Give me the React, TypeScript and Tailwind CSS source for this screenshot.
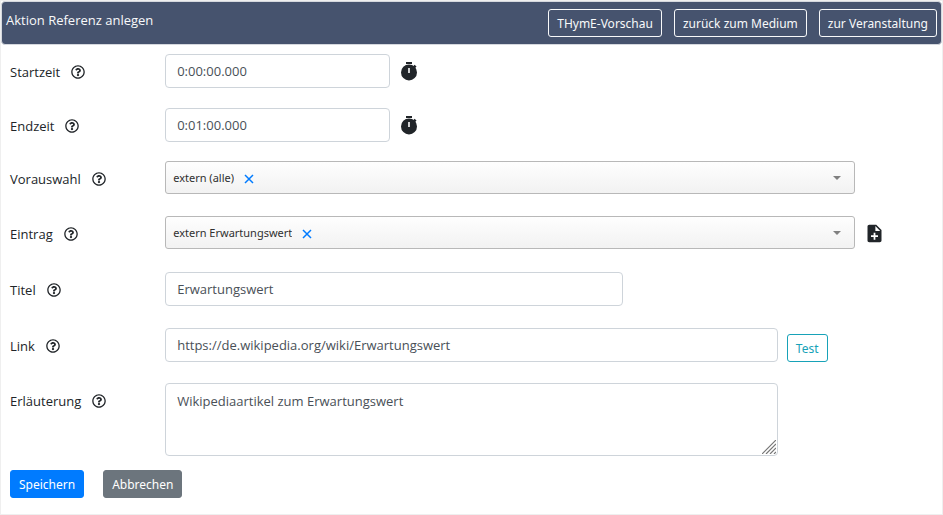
import type { ReactNode } from "react";
import { FaRegQuestionCircle } from "react-icons/fa";
import { MdNoteAdd } from "react-icons/md";

const inputClass =
  "block w-full h-[34px] rounded border border-[#ced4da] bg-white px-[11px] text-[13px] text-[#495057] outline-none";
const buttonClass =
  "h-7 rounded-[3px] border px-2 pt-[2px] font-['Noto_Sans',sans-serif] text-xs whitespace-nowrap";

function StopwatchIcon() {
  return (
    <svg width="18" height="19" viewBox="0 0 18 19" fill="currentColor">
      <rect x="6" y="0" width="6" height="2" />
      <path d="M14.6 2.8l1.9 1.7-1.6 1.8-1.9-1.7z" />
      <path
        fillRule="evenodd"
        d="M9 2.4a8 8 0 1 0 0 16a8 8 0 0 0 0-16zM8.2 5.9h1.6v5h-1.6z"
      />
    </svg>
  );
}

function Row({
  id,
  label,
  className,
  children,
}: {
  id: string;
  label: string;
  className: string;
  children: ReactNode;
}) {
  return (
    <div className={`grid grid-cols-12 gap-x-2 ${className}`}>
      <div className="col-span-2 flex h-[35px] items-center gap-[11px]">
        <label htmlFor={id}>{label}</label>
        <button type="button" aria-label={`Hilfe zu ${label}`}>
          <FaRegQuestionCircle size={14} />
        </button>
      </div>
      {children}
    </div>
  );
}

function TagSelect({ id, value }: { id: string; value: string }) {
  return (
    <div className="col-span-9 flex h-[33px] items-center rounded-[3px] border border-[#b8b8b8] bg-linear-to-b from-[#fefefe] to-[#f2f2f2] pr-[13px] pl-[7px]">
      <select
        id={id}
        defaultValue={value}
        className="field-sizing-content appearance-none bg-transparent font-['Noto_Sans',sans-serif] text-[11px] text-[#303030] outline-none"
      >
        <option>{value}</option>
      </select>
      <button type="button" aria-label={`${value} entfernen`} className="ml-[10px] pt-[2px] text-[#007bff]">
        <svg width="10" height="10" viewBox="0 0 10 10" stroke="currentColor" strokeWidth="1.5">
          <path d="M1 1l8 8M9 1l-8 8" />
        </svg>
      </button>
      <svg className="ml-auto" width="8" height="4" viewBox="0 0 8 4" fill="#808080">
        <path d="M0 0h8L4 4z" />
      </svg>
    </div>
  );
}

export default function App() {
  return (
    <form
      className="border border-[#efefef] bg-white font-['Open_Sans',sans-serif] text-[13px] leading-5 text-[#212529]"
      onSubmit={(e) => e.preventDefault()}
    >
      <header className="flex items-start justify-between rounded border border-[#d5d8de] bg-[#46536e] px-1 py-[7px] text-[#f8f9fa]">
        <h1 className="pt-px">Aktion Referenz anlegen</h1>
        <div className="flex gap-3">
          <button type="button" className={`${buttonClass} border-[#f8f9fa]`}>THymE-Vorschau</button>
          <button type="button" className={`${buttonClass} border-[#f8f9fa]`}>zurück zum Medium</button>
          <button type="button" className={`${buttonClass} border-[#f8f9fa]`}>zur Veranstaltung</button>
        </div>
      </header>

      <div className="px-[9px] pt-[9px] pb-4">
        <Row id="start" label="Startzeit" className="mb-[19px]">
          <div className="col-span-3">
            <input id="start" type="text" defaultValue="0:00:00.000" className={inputClass} />
          </div>
          <button type="button" aria-label="Startzeit übernehmen" className="ml-[2px] justify-self-start">
            <StopwatchIcon />
          </button>
        </Row>
        <Row id="end" label="Endzeit" className="mb-[18px]">
          <div className="col-span-3">
            <input id="end" type="text" defaultValue="0:01:00.000" className={inputClass} />
          </div>
          <button type="button" aria-label="Endzeit übernehmen" className="ml-[2px] justify-self-start">
            <StopwatchIcon />
          </button>
        </Row>
        <Row id="preset" label="Vorauswahl" className="mb-5">
          <TagSelect id="preset" value="extern (alle)" />
        </Row>
        <Row id="item" label="Eintrag" className="mb-[21px]">
          <TagSelect id="item" value="extern Erwartungswert" />
          <button type="button" aria-label="Neuer Eintrag" className="ml-px justify-self-start">
            <MdNoteAdd size={21} />
          </button>
        </Row>
        <Row id="title" label="Titel" className="mb-[21px]">
          <div className="col-span-6">
            <input id="title" type="text" defaultValue="Erwartungswert" className={inputClass} />
          </div>
        </Row>
        <Row id="link" label="Link" className="mb-5">
          <div className="col-span-8">
            <input
              id="link"
              type="text"
              defaultValue="https://de.wikipedia.org/wiki/Erwartungswert"
              className={inputClass}
            />
          </div>
          <button
            type="button"
            className={`${buttonClass} mt-[6px] ml-px self-start justify-self-start border-[#17a2b8] text-[#17a2b8]`}
          >
            Test
          </button>
        </Row>
        <Row id="note" label="Erläuterung" className="mb-[14px]">
          <div className="relative col-span-8">
            <textarea
              id="note"
              defaultValue="Wikipediaartikel zum Erwartungswert"
              className="block h-[73px] w-full resize-none rounded border border-[#ced4da] px-[11px] py-[7px] text-[13px] text-[#495057] outline-none"
            />
            <svg
              className="pointer-events-none absolute right-[2px] bottom-[2px]"
              width="14"
              height="14"
              viewBox="0 0 14 14"
              stroke="#777"
              strokeWidth="1.2"
            >
              <path d="M0 14L14 0M4 14L14 4M8 14L14 8M12 14L14 12" />
            </svg>
          </div>
        </Row>
        <div className="flex gap-[19px]">
          <button type="submit" className={`${buttonClass} border-[#007bff] bg-[#007bff] text-white`}>
            Speichern
          </button>
          <button type="button" className={`${buttonClass} border-[#6c757d] bg-[#6c757d] text-white`}>
            Abbrechen
          </button>
        </div>
      </div>
    </form>
  );
}
